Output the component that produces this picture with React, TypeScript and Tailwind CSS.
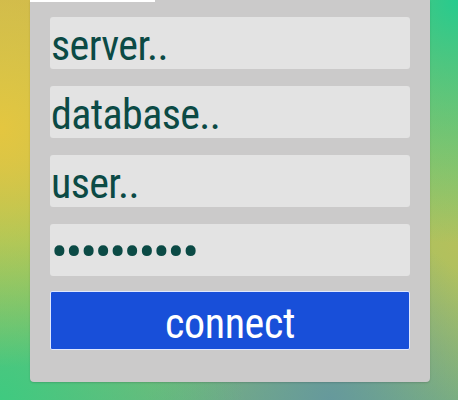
const fieldClass =
  "block h-[52px] w-full rounded-[3px] bg-[#e3e3e3] px-[1px] text-[#0b4a45] outline-none placeholder:text-[#0b4a45]";

export default function App() {
  return (
    <div className="h-[400px] w-full overflow-hidden bg-[radial-gradient(circle_at_0%_32%,#e4c640_0%,transparent_45%),radial-gradient(circle_at_100%_0%,#26cb8e_0%,transparent_40%),radial-gradient(circle_at_0%_100%,#3fca80_0%,transparent_40%),radial-gradient(circle_at_72%_100%,#66999c_0%,transparent_35%),radial-gradient(circle_at_100%_62%,#b4c05c_0%,transparent_35%),linear-gradient(180deg,#c4b454_0%,#9cc866_60%,#78b47c_100%)]">
      <div
        className="ml-[30px] w-[400px] rounded-b-[4px] bg-[#cbcaca] px-[20px] pb-[32px] shadow-[0_1px_2px_rgba(0,0,0,0.15)]"
        style={{ fontFamily: '"Roboto Condensed", "DejaVu Sans Condensed", sans-serif' }}
      >
        <div className="h-[2px] w-[125px] -translate-x-[20px] bg-white" />
        <form className="flex flex-col gap-[17px] pt-[15px]" onSubmit={(e) => e.preventDefault()}>
          <input className={`${fieldClass} pt-[5px] text-[42px] leading-[48px] tracking-[-0.6px]`} placeholder="server.." />
          <input className={`${fieldClass} pt-[5px] text-[42px] leading-[48px] tracking-[-0.6px]`} placeholder="database.." />
          <input className={`${fieldClass} pt-[5px] text-[42px] leading-[48px] tracking-[-0.6px]`} placeholder="user.." />
          <input
            className={`${fieldClass} pt-[4px] text-[50px] leading-[48px] tracking-[-2.3px]`}
            type="password"
            defaultValue="secret1234"
          />
          <button
            type="submit"
            className="-mt-[2px] h-[59px] w-full rounded-[2px] border border-[#dfe7ff] bg-[#184fd9] pt-[6px] text-[42px] leading-[48px] tracking-[-0.4px] text-white"
          >
            connect
          </button>
        </form>
      </div>
    </div>
  );
}
